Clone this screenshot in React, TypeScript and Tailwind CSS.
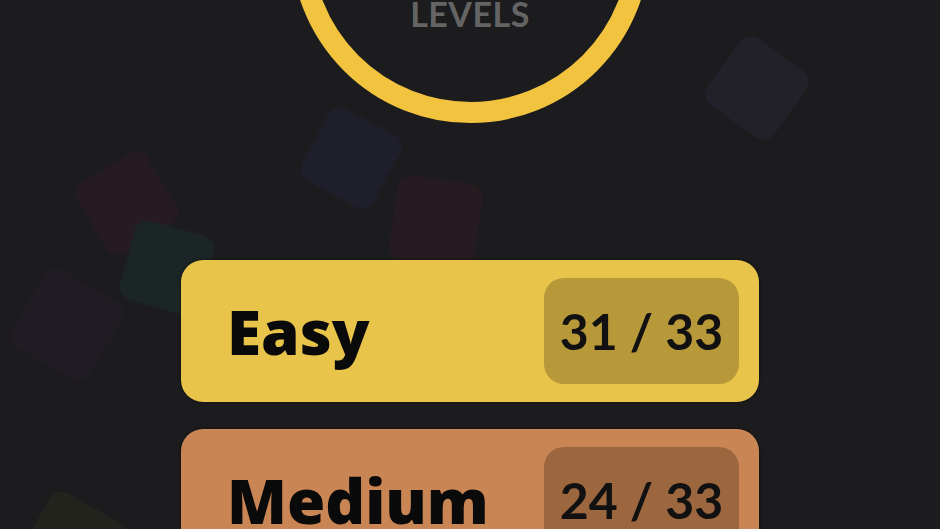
const squares = [
  { cls: 'left-[310px] top-[117px] w-[82px] h-[82px] rotate-[28deg] bg-[#1f1f2b]' },
  { cls: 'left-[86px] top-[162px] w-[82px] h-[82px] rotate-[-32deg] bg-[#261b20]' },
  { cls: 'left-[126px] top-[227px] w-[82px] h-[82px] rotate-[15deg] bg-[#1c2526]' },
  { cls: 'left-[393px] top-[179px] w-[86px] h-[86px] rotate-[8deg] bg-[#261b20]' },
  { cls: 'left-[22px] top-[280px] w-[90px] h-[90px] rotate-[30deg] bg-[#211c24]' },
  { cls: 'left-[716px] top-[47px] w-[82px] h-[82px] rotate-[36deg] bg-[#22212a]' },
  { cls: 'left-[30px] top-[502px] w-[84px] h-[84px] rotate-[30deg] bg-[#23231d]' },
];

const levels = [
  { name: 'Easy', done: 31, total: 33, card: 'bg-[#e9c44b]', badge: 'bg-[#b8993a]' },
  { name: 'Medium', done: 24, total: 33, card: 'bg-[#c98553]', badge: 'bg-[#9c673f]' },
];

export default function App() {
  return (
    <div className="relative w-[940px] h-[529px] overflow-hidden bg-[#1c1c1e] font-['Lato',sans-serif]">
      {squares.map((s, i) => (
        <div key={i} className={`absolute rounded-[14px] ${s.cls}`} />
      ))}

      <div className="relative flex flex-col items-center">
        <div className="mt-[-236px] w-[359px] h-[359px] rounded-full border-[21px] border-[#f2c33f] flex flex-col items-center justify-end pb-[71px]">
          <span className="font-['Lato',sans-serif] text-[34px] leading-none font-bold tracking-[0.5px] text-[#646464]">
            LEVELS
          </span>
        </div>

        <div className="mt-[137px] flex flex-col gap-[27px]">
          {levels.map(l => (
            <div
              key={l.name}
              className={`w-[578px] h-[142px] rounded-[22px] flex items-center justify-between pl-[46px] pr-[20px] shadow-[0_0_3px_rgba(0,0,0,0.6)] ${l.card}`}
            >
              <span className="font-['Open_Sans',sans-serif] text-[62px] leading-none font-extrabold text-[#0a0a0a]">
                {l.name}
              </span>
              <div className={`w-[195px] h-[106px] rounded-[20px] flex items-center justify-center ${l.badge}`}>
                <span className="font-['Lato',sans-serif] text-[50px] leading-none font-bold text-[#111111]">
                  {l.done} / {l.total}
                </span>
              </div>
            </div>
          ))}
        </div>
      </div>
    </div>
  );
}
